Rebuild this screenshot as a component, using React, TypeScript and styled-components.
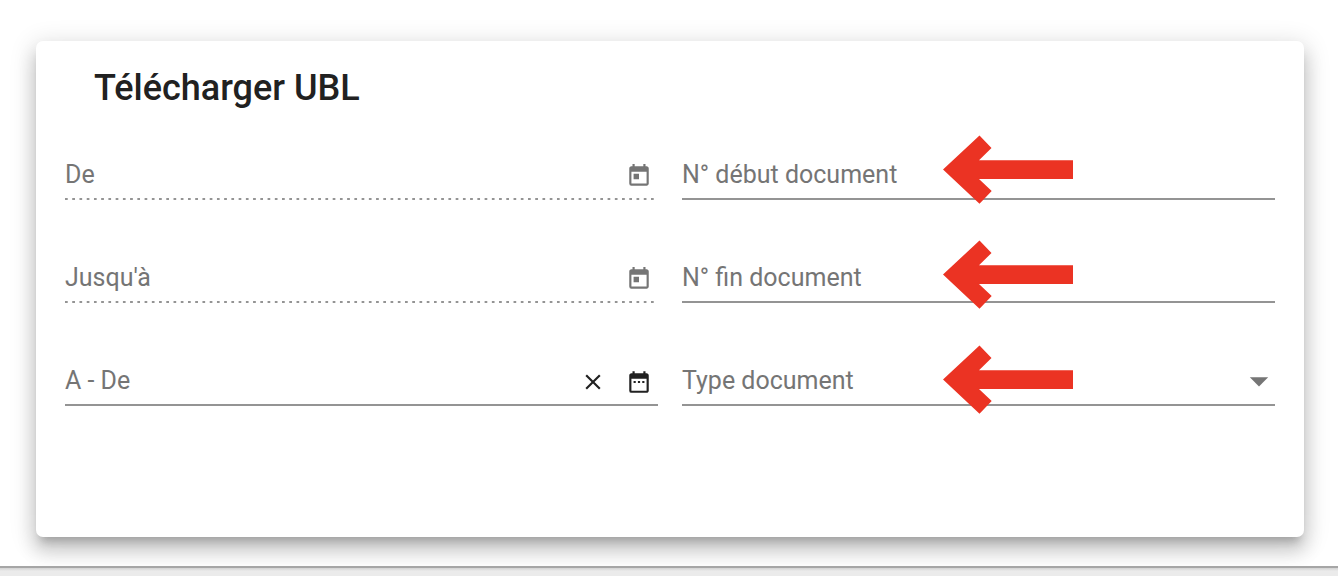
import React from "react";
import styled, { createGlobalStyle, css } from "styled-components";
import { MdArrowDropDown, MdClose, MdDateRange, MdToday } from "react-icons/md";

const GlobalStyle = createGlobalStyle`
  *, *::before, *::after { box-sizing: border-box; }
  body {
    margin: 0;
    background: #ffffff;
    color: #212121;
    font-family: Roboto, "Liberation Sans", sans-serif;
  }
`;

const Page = styled.div`
  display: flex;
  flex-direction: column;
  min-height: 100vh;
  overflow: hidden;
`;

const Main = styled.main`
  padding: 41px 34px 29px 36px;
`;

const Card = styled.section`
  padding: 25px 29px 131px;
  border-radius: 7px;
  background: #ffffff;
  box-shadow:
    0 9px 9px -5px rgba(0, 0, 0, 0.2),
    0 14px 18px 2px rgba(0, 0, 0, 0.14),
    0 5px 25px 4px rgba(0, 0, 0, 0.12);
`;

const Title = styled.h1`
  margin: 0 0 36px;
  padding-left: 29px;
  font-size: 36px;
  line-height: 44px;
  font-weight: 500;
`;

const Fields = styled.form`
  position: relative;
  display: grid;
  grid-template-columns: 1fr 1fr;
  gap: 49px 24px;
`;

const dottedLine = css`
  background: linear-gradient(to right, #949494 33%, transparent 0) left bottom /
    calc(100% / 81.8) 2px repeat-x;
`;

const solidLine = css`
  background: linear-gradient(#949494, #949494) left bottom / 100% 2px no-repeat;
`;

const Field = styled.div<{ $dotted?: boolean }>`
  display: flex;
  align-items: center;
  height: 54px;
  padding: 6px 0 2px;
  ${({ $dotted }) => ($dotted ? dottedLine : solidLine)}
`;

const Label = styled.label`
  color: #757575;
  font-size: 25px;
  line-height: 32px;
  white-space: nowrap;
`;

const control = css`
  flex: 1;
  min-width: 0;
  height: 32px;
  padding: 0 8px;
  border: 0;
  outline: 0;
  background: transparent;
  color: #212121;
  font: inherit;
  font-size: 25px;
`;

const Input = styled.input`
  ${control}
`;

const Select = styled.select`
  ${control}
  appearance: none;
`;

const IconButton = styled.button`
  display: flex;
  align-items: center;
  justify-content: center;
  width: 46px;
  height: 44px;
  padding: 2px 0 0;
  border: 0;
  background: transparent;
  color: #212121;
  font-size: 26px;

  &:last-child {
    margin-right: -4px;
  }

  &:disabled {
    color: #757575;
  }
`;

const Caret = styled(MdArrowDropDown)`
  margin-right: -6px;
  color: #757575;
  font-size: 44px;
  pointer-events: none;
`;

const Arrows = styled.div`
  position: absolute;
  top: -11px;
  left: calc(50% + 273px);
  display: flex;
  flex-direction: column;
  gap: 36px;
  pointer-events: none;
`;

const ArrowSvg = styled.svg`
  display: block;
  width: 131px;
  height: 69px;
  fill: #eb3323;
`;

const Footer = styled.footer`
  position: relative;
  flex: 1;
  min-height: 10px;
  border-top: 2px solid #a6a6a6;
  background: linear-gradient(#d2d2d2, #ebebeb 3px);
`;

const Arrow = () => (
  <ArrowSvg viewBox="0 0 131 69" aria-hidden="true">
    <path d="M0 34.5 36.5 .5 48.5 13 36 25.3H130V44H36L48.7 56 36.5 68.8Z" />
  </ArrowSvg>
);

export default function App() {
  return (
    <Page>
      <GlobalStyle />
      <Main>
        <Card>
          <Title>Télécharger UBL</Title>
          <Fields>
            <Field $dotted>
              <Label htmlFor="from">De</Label>
              <Input id="from" disabled />
              <IconButton type="button" aria-label="Choisir la date de début" disabled>
                <MdToday />
              </IconButton>
            </Field>
            <Field>
              <Label htmlFor="first">N° début document</Label>
              <Input id="first" />
            </Field>
            <Field $dotted>
              <Label htmlFor="until">Jusqu'à</Label>
              <Input id="until" disabled />
              <IconButton type="button" aria-label="Choisir la date de fin" disabled>
                <MdToday />
              </IconButton>
            </Field>
            <Field>
              <Label htmlFor="last">N° fin document</Label>
              <Input id="last" />
            </Field>
            <Field>
              <Label htmlFor="range">A - De</Label>
              <Input id="range" />
              <IconButton type="button" aria-label="Effacer">
                <MdClose />
              </IconButton>
              <IconButton type="button" aria-label="Choisir une période">
                <MdDateRange />
              </IconButton>
            </Field>
            <Field>
              <Label htmlFor="type">Type document</Label>
              <Select id="type" defaultValue="">
                <option value="" />
              </Select>
              <Caret />
            </Field>
            <Arrows>
              <Arrow />
              <Arrow />
              <Arrow />
            </Arrows>
          </Fields>
        </Card>
      </Main>
      <Footer />
    </Page>
  );
}
